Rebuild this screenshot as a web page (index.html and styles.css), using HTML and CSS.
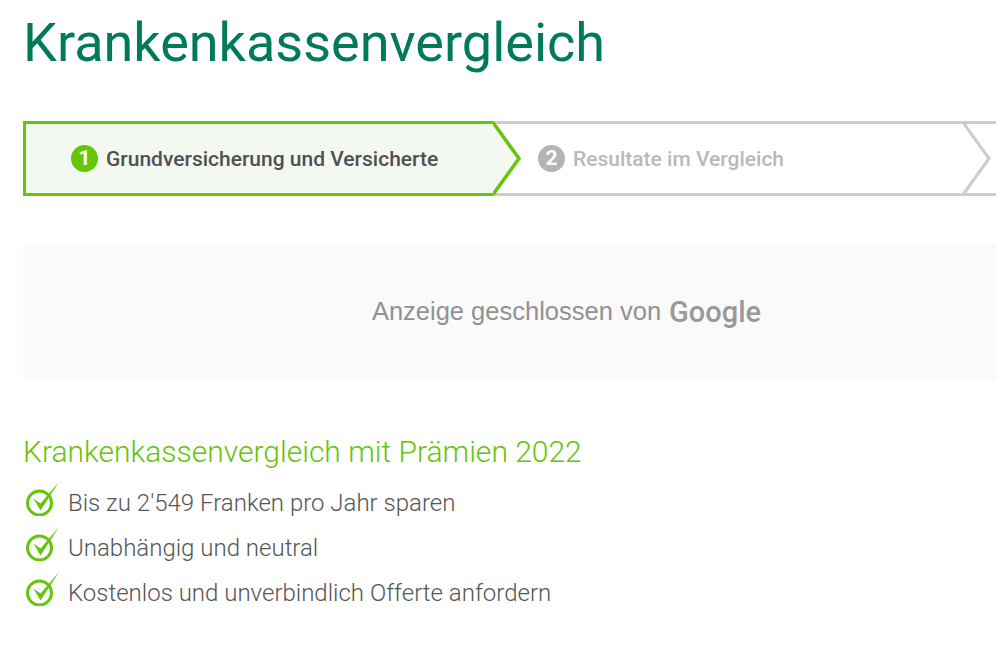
FILE: index.html
```html
<!DOCTYPE html>
<html lang="de">
<head>
    <meta charset="UTF-8">
    <meta name="viewport" content="width=device-width, initial-scale=1.0">
    <title>Krankenkassenvergleich</title>
    <link rel="stylesheet" href="styles.css">
</head>
<body>
    <div class="page">
        <h1 class="title">Krankenkassenvergleich</h1>

        <div class="steps">
            <div class="step step-active">
                <span class="step-number">1</span>
                <span class="step-label">Grundversicherung und Versicherte</span>
                <svg class="step-tip" width="30" height="75" viewBox="0 0 30 75">
                    <path d="M0 1.5 L26 37.5 L0 73.5" fill="#f3f8f0" stroke="#66c40a" stroke-width="3.5"/>
                </svg>
            </div>
            <div class="step">
                <span class="step-number">2</span>
                <span class="step-label">Resultate im Vergleich</span>
                <svg class="step-tip" width="30" height="75" viewBox="0 0 30 75">
                    <path d="M0 1.5 L26 37.5 L0 73.5" fill="#fff" stroke="#cccccc" stroke-width="3"/>
                </svg>
            </div>
            <div class="step step-empty"></div>
        </div>

        <div class="ad-box">
            <span class="ad-text">Anzeige geschlossen von</span>
            <span class="ad-logo">Google</span>
        </div>

        <h2 class="subtitle">Krankenkassenvergleich mit Prämien 2022</h2>
        <ul class="benefits">
            <li class="benefit">
                <svg class="check" width="36" height="34" viewBox="0 0 36 34">
                    <circle cx="15.5" cy="21" r="12" fill="none" stroke="#66c40a" stroke-width="3"/>
                    <path d="M9.5 16.5 L16.5 28.5 L35 0 L16.5 21.5 Z" fill="#66c40a"/>
                </svg>
                <span>Bis zu 2'549 Franken pro Jahr sparen</span>
            </li>
            <li class="benefit">
                <svg class="check" width="36" height="34" viewBox="0 0 36 34">
                    <circle cx="15.5" cy="21" r="12" fill="none" stroke="#66c40a" stroke-width="3"/>
                    <path d="M9.5 16.5 L16.5 28.5 L35 0 L16.5 21.5 Z" fill="#66c40a"/>
                </svg>
                <span>Unabhängig und neutral</span>
            </li>
            <li class="benefit">
                <svg class="check" width="36" height="34" viewBox="0 0 36 34">
                    <circle cx="15.5" cy="21" r="12" fill="none" stroke="#66c40a" stroke-width="3"/>
                    <path d="M9.5 16.5 L16.5 28.5 L35 0 L16.5 21.5 Z" fill="#66c40a"/>
                </svg>
                <span>Kostenlos und unverbindlich Offerte anfordern</span>
            </li>
        </ul>
    </div>
</body>
</html>
```

FILE: styles.css
```css
* {
    margin: 0;
    padding: 0;
    box-sizing: border-box;
}

html, body {
    height: 100%;
    overflow: hidden;
    background: #fff;
}

body {
    font-family: Roboto, "Liberation Sans", sans-serif;
    color: #555;
}

.page {
    padding: 0 0 0 23px;
    width: 996px;
}

.title {
    font-size: 54px;
    font-weight: 400;
    line-height: 62px;
    padding-top: 12px;
    color: #007a58;
    margin-bottom: 47px;
}

.steps {
    display: flex;
    width: 973px;
    overflow: hidden;
    margin-bottom: 48px;
}

.step {
    position: relative;
    flex: 0 0 470px;
    height: 75px;
    display: flex;
    align-items: center;
    padding-left: 45px;
    gap: 8px;
    border-top: 3px solid #ccc;
    border-bottom: 3px solid #ccc;
    font-size: 21px;
    font-weight: 500;
    color: #b9b9b9;
}

.step-active {
    border: 3px solid #66c40a;
    border-right: 0;
    background: #f3f8f0;
    color: #505050;
}

.step-number {
    width: 27px;
    height: 27px;
    border-radius: 50%;
    background: #b4b4b4;
    color: #fff;
    font-size: 21px;
    font-weight: 700;
    line-height: 27px;
    text-align: center;
}

.step-active .step-number {
    background: #66c40a;
}

.step-tip {
    position: absolute;
    top: -3px;
    left: 100%;
    z-index: 1;
}

.ad-box {
    width: 973px;
    height: 135px;
    background: #fafafa;
    display: flex;
    align-items: center;
    justify-content: center;
    gap: 8px;
    padding-left: 114px;
    margin-bottom: 54px;
}

.ad-text {
    font-family: "Liberation Sans", Arial, sans-serif;
    font-size: 25.5px;
    color: #919191;
}

.ad-logo {
    font-size: 29px;
    font-weight: 500;
    color: #999;
}

.subtitle {
    font-size: 30px;
    font-weight: 300;
    line-height: 38px;
    color: #66c40a;
    margin-bottom: 9px;
}

.benefits {
    list-style: none;
}

.benefit {
    display: flex;
    align-items: center;
    height: 45px;
    font-size: 24px;
    font-weight: 300;
    color: #555;
}

.check {
    margin-left: 1px;
    margin-right: 8px;
    margin-top: -8px;
}
```
